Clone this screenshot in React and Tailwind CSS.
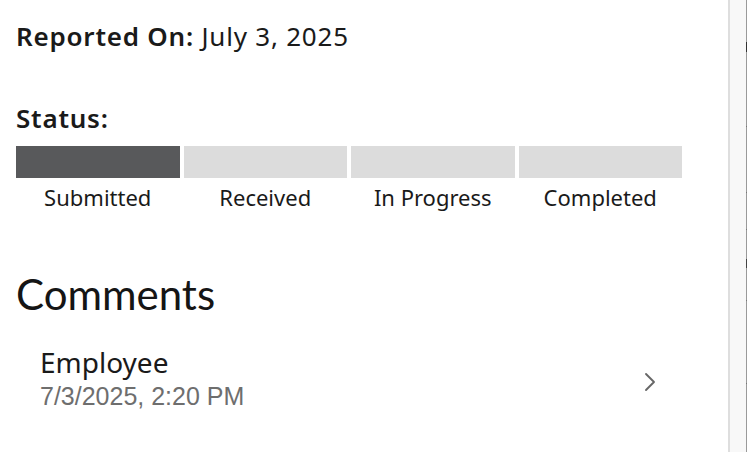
import React from "react";
import { ChevronRight } from "lucide-react";

const steps = ["Submitted", "Received", "In Progress", "Completed"];

// marks along the edge of the collapsed panel: [top, height, colour]
const edgeMarks = [
    [42, 10, "bg-[#333]"],
    [126, 1, "bg-[#777]"],
    [192, 1, "bg-[#777]"],
    [229, 1, "bg-[#777]"],
    [259, 9, "bg-[#444]"],
    [300, 1, "bg-[#777]"],
    [383, 1, "bg-[#777]"],
];

// Tracker bar: every step up to `current` is filled dark
const StatusTracker = ({ current = 0 }) => (
    <div className="grid grid-cols-4 gap-x-1 w-[666px]">
        {steps.map((s, i) => (
            <div key={s} className="flex flex-col items-center">
                <div className={`h-8 w-full ${i <= current ? "bg-[#58595b]" : "bg-[#dcdcdc]"}`} />
                <span className="mt-[4px] text-[22px] leading-[30px] text-[#1a1a1a]">{s}</span>
            </div>
        ))}
    </div>
);

const CommentRow = ({ author, time }) => (
    <div className="flex items-center w-[666px] pl-6 pr-4">
        <div className="flex-1 flex flex-col">
            <span className="text-[28px] leading-[32px] text-[#1a1a1a]">{author}</span>
            <span className="mt-[3px] text-[25px] leading-[30px] text-[#6e6e6e] font-['Liberation_Sans',sans-serif]">{time}</span>
        </div>
        <ChevronRight size={32} strokeWidth={1.4} className="mt-[7px] text-[#666]" />
    </div>
);

export default function App() {
    return (
        <div className="flex h-[452px] w-[748px] overflow-hidden bg-white font-['Noto_Sans',sans-serif]">
            <main className="flex-1 pl-4 pt-[20px]">
                <p className="text-[26px] leading-[32px] tracking-[0.03em] text-[#1a1a1a]">
                    <span className="font-semibold">Reported On:</span> July 3, 2025
                </p>

                <h3 className="mt-[50px] text-[26px] leading-[32px] tracking-[0.03em] font-semibold text-[#1a1a1a]">Status:</h3>
                <div className="mt-[12px]">
                    <StatusTracker current={0} />
                </div>

                <h2 className="mt-[57px] text-[42px] leading-[50px] text-[#151515] font-['Lato',sans-serif]">Comments</h2>
                <div className="mt-[27px]">
                    <CommentRow author="Employee" time="7/3/2025, 2:20 PM" />
                </div>
            </main>

            {/* collapsed side panel */}
            <aside className="flex w-[20px] border-l-2 border-[#dedede] bg-[#f8f8f8]">
                <div className="flex-1" />
                <div className="relative w-px bg-[#9a9a9a]">
                    {edgeMarks.map(([top, h, c]) => (
                        <div key={top} className={`absolute left-0 w-px ${c}`} style={{ top, height: h }} />
                    ))}
                </div>
                <div className="w-px bg-white" />
            </aside>
        </div>
    );
}
